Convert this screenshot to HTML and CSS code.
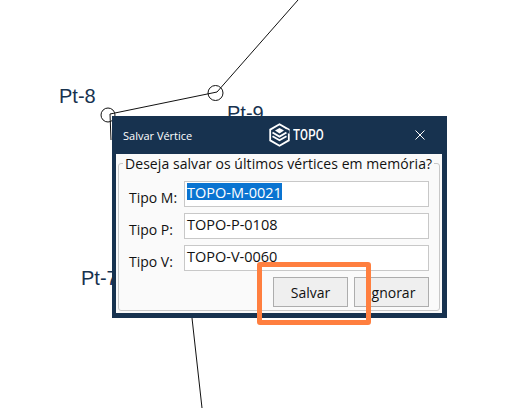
FILE: index.html
```html
<!DOCTYPE html>
<html lang="en">
<head>
    <meta charset="UTF-8">
    <title>Salvar Vértice</title>
    <link rel="stylesheet" href="styles.css">
</head>
<body>
    <div class="canvas">
        <svg class="drawing" width="531" height="408" viewBox="0 0 531 408">
            <polyline points="298,0 217,92 110,114 111,140" class="edge"/>
            <line x1="192" y1="318" x2="202" y2="408" class="edge"/>
            <circle cx="215.5" cy="93" r="7.5" class="edge"/>
            <circle cx="108" cy="115" r="7" class="edge"/>
        </svg>
        <span class="point point-8">Pt-8</span>
        <span class="point point-9">Pt-9</span>
        <span class="point point-7">Pt-7</span>

        <div class="dialog">
            <div class="titlebar">
                <span class="title">Salvar Vértice</span>
                <div class="brand">
                    <svg width="21" height="24" viewBox="0 0 21 24">
                        <path d="M10.5 1.2 L19.8 6.6 V17.4 L10.5 22.8 L1.2 17.4 V6.6 Z" fill="none" stroke="#fff" stroke-width="1.8"/>
                        <path d="M10.5 5 L15 7.6 L10.5 10.4 L6 7.6 Z" fill="#fff"/>
                        <path d="M3.5 9.5 L10.5 13.6 L17.5 9.5 M3.5 13.2 L10.5 17.3 L17.5 13.2" fill="none" stroke="#fff" stroke-width="1.8"/>
                        <path d="M17.5 6 L20.5 7.8 V11 L17.5 9.2 Z" fill="#17324f"/>
                    </svg>
                    <span class="brand-name">TOPO</span>
                </div>
                <svg class="close" width="10" height="10" viewBox="0 0 10 10">
                    <path d="M0.5 0.5 L9.5 9.5 M9.5 0.5 L0.5 9.5" stroke="#fff" fill="none"/>
                </svg>
            </div>
            <div class="panel">
                <fieldset class="group">
                    <legend>Deseja salvar os últimos vértices em memória?</legend>
                    <div class="row">
                        <label>Tipo M:</label>
                        <div class="field"><span class="selected">TOPO-M-0021</span></div>
                    </div>
                    <div class="row">
                        <label>Tipo P:</label>
                        <div class="field">TOPO-P-0108</div>
                    </div>
                    <div class="row">
                        <label>Tipo V:</label>
                        <div class="field">TOPO-V-0060</div>
                    </div>
                    <div class="buttons">
                        <button>Salvar</button>
                        <button>Ignorar</button>
                    </div>
                </fieldset>
            </div>
        </div>

        <div class="highlight"></div>
    </div>
</body>
</html>
```

FILE: styles.css
```css
body {
    margin: 0;
    background-color: white;
    font-family: "Open Sans", "Noto Sans", sans-serif;
}
.canvas {
    position: relative;
    width: 531px;
    height: 408px;
    overflow: hidden;
}
.drawing {
    position: absolute;
    left: 0;
    top: 0;
}
.edge {
    fill: none;
    stroke: #111;
    stroke-width: 1;
}
.point {
    position: absolute;
    font-family: "Liberation Sans", Arial, sans-serif;
    font-size: 20px;
    color: #17324f;
}
.point-8 { left: 59px; top: 85px; }
.point-9 { left: 227px; top: 102px; }
.point-7 { left: 81px; top: 267px; }
.dialog {
    position: absolute;
    left: 112px;
    top: 116px;
    width: 335px;
    height: 202px;
    display: flex;
    flex-direction: column;
    background-color: #17324f;
}
.titlebar {
    height: 38px;
    flex-shrink: 0;
    display: flex;
    align-items: center;
    padding: 0 22px 0 11px;
    color: white;
}
.title {
    width: 146px;
    font-size: 11px;
}
.brand {
    display: flex;
    align-items: center;
    gap: 3px;
}
.brand-name {
    width: 32px;
    font-family: "Roboto", sans-serif;
    font-size: 14px;
    font-weight: 500;
    letter-spacing: 0.3px;
    transform: scaleX(0.82);
    transform-origin: left center;
}
.close {
    margin-left: auto;
}
.panel {
    flex: 1;
    margin: 0 5px 5px 4px;
    padding: 0 2px 2px;
    background-color: #fafafa;
}
.group {
    margin: 0;
    padding: 8px 10px 0;
    border: 1px solid #c8c8c8;
    border-radius: 3px;
    height: 157px;
    box-sizing: border-box;
    min-width: 0;
}
.group legend {
    padding: 0 2px;
    margin-left: -6px;
    font-size: 14px;
    line-height: 19px;
    letter-spacing: 0.06px;
    white-space: nowrap;
    color: #111;
}
.row {
    display: flex;
    margin-bottom: 6px;
}
.row label {
    width: 55px;
    flex-shrink: 0;
    font-size: 14px;
    line-height: 26px;
    padding-top: 4px;
    height: 22px;
    color: #111;
}
.field {
    flex: 1;
    height: 26px;
    box-sizing: border-box;
    padding: 2px 2px 1px;
    background-color: white;
    border: 1px solid #c8c8c8;
    font-size: 14.5px;
    line-height: 17px;
    color: #111;
}
.selected {
    display: inline-block;
    vertical-align: top;
    height: 17px;
    box-sizing: border-box;
    margin-top: -1px;
    padding-top: 1px;
    background-color: #0a74d1;
    color: white;
}
.buttons {
    display: flex;
    justify-content: flex-end;
    gap: 6px;
}
button {
    width: 75px;
    height: 30px;
    padding: 0;
    background-color: #efefef;
    border: 1px solid #adadad;
    font-family: inherit;
    font-size: 14px;
    color: #111;
}
.highlight {
    position: absolute;
    left: 257px;
    top: 262px;
    width: 114px;
    height: 63px;
    box-sizing: border-box;
    border: 5px solid #ff7f3f;
    border-radius: 3px;
}
```
